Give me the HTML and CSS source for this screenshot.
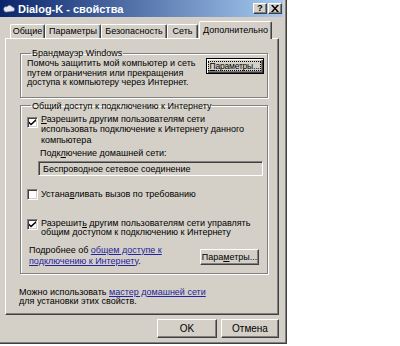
FILE: index.html
```html
<!DOCTYPE html>
<html lang="ru">
<head>
<meta charset="utf-8">
<link rel="stylesheet" href="styles.css">
</head>
<body>
<div class="window">
  <div class="titlebar">
    <svg class="ticon" width="12" height="9" viewBox="0 0 12 9"><path d="M1 6 C0 4 2 2 4 3 C5 1 8 1 9 3 C11 3 12 5 11 7 L3 8 C2 8 1 7 1 6 Z" fill="#e8e8f0" stroke="#8a90b0" stroke-width="0.6"/></svg>
    <span class="title">Dialog-K - свойства</span>
    <div class="tbtns">
      <span class="tbtn">?</span>
      <span class="tbtn">
        <svg width="8" height="7" viewBox="0 0 8 7"><path d="M0 0h2l2 2.5L6 0h2L5 3.5 8 7H6L4 4.5 2 7H0l3-3.5z" fill="#000"/></svg>
      </span>
    </div>
  </div>
  <div class="tabs">
    <div class="tab w1">Общие</div>
    <div class="tab w2">Параметры</div>
    <div class="tab w3">Безопасность</div>
    <div class="tab w4">Сеть</div>
    <div class="tab sel">Дополнительно</div>
  </div>
  <div class="panel">
    <fieldset class="group g1">
      <legend>Брандмауэр Windows</legend>
      <div class="g1row">
        <p class="desc">Помочь защитить мой компьютер и сеть<br>путем ограничения или прекращения<br>доступа к компьютеру через Интернет.</p>
        <button class="btn focus"><span class="fr"><u>П</u>араметры...</span></button>
      </div>
    </fieldset>
    <fieldset class="group g2">
      <legend>Общий доступ к подключению к Интернету</legend>
      <div class="chkrow r1">
        <span class="chk"><svg width="7" height="7" viewBox="0 0 7 7"><path d="M0 2.5l2 2 5-4.5v2l-5 4.5-2-2z" fill="#000"/></svg></span>
        <div class="chktext"><u>Р</u>азрешить другим пользователям сети<br>использовать подключение к Интернету данного<br>компьютера</div>
      </div>
      <div class="lbl">Подк<u>л</u>ючение домашней сети:</div>
      <div class="field">Беспроводное сетевое соединение</div>
      <div class="chkrow r2">
        <span class="chk"></span>
        <div class="chktext">Устана<u>в</u>ливать вызов по требованию</div>
      </div>
      <div class="chkrow r3">
        <span class="chk"><svg width="7" height="7" viewBox="0 0 7 7"><path d="M0 2.5l2 2 5-4.5v2l-5 4.5-2-2z" fill="#000"/></svg></span>
        <div class="chktext">Разрешит<u>ь</u> другим пользователям сети управлять<br>общим доступом к подключению к Интернету</div>
      </div>
      <div class="morerow">
        <p class="more">Подробнее об <a href="#">общем доступе к<br>подключению к Интернету</a>.</p>
        <button class="btn b2">Пара<u>м</u>етры...</button>
      </div>
    </fieldset>
    <p class="foot">Можно использовать <a href="#">мастер домашней сети</a><br>для установки этих свойств.</p>
  </div>
  <div class="actions">
    <button class="btn ok">OK</button>
    <button class="btn cancel">Отмена</button>
  </div>
</div>
</body>
</html>
```
FILE: styles.css
```css
* { box-sizing: border-box; }
html, body { margin: 0; padding: 0; background: #fff; }
body {
  font-family: "Liberation Sans", Arial, sans-serif;
  font-size: 9px;
  line-height: 10px;
  color: #000;
}
.window {
  width: 287px;
  height: 344px;
  background: #d4d0c8;
  border-right: 1px solid #404040;
  border-bottom: 1px solid #404040;
  box-shadow: inset -1px -1px 0 #808080;
}
.titlebar {
  height: 17px;
  margin-right: 3px;
  background: linear-gradient(to right, #0a246a, #a6caf0);
  display: flex;
  align-items: center;
  padding-left: 3px;
}
.ticon { flex: none; }
.title {
  color: #fff;
  font-weight: bold;
  font-size: 11px;
  margin-left: 3px;
  flex: 1;
}
.tbtns { display: flex; gap: 1px; margin-right: 1px; }
.tbtn {
  width: 14px;
  height: 11px;
  background: #d4d0c8;
  border-top: 1px solid #fff;
  border-left: 1px solid #fff;
  border-right: 1px solid #404040;
  border-bottom: 1px solid #404040;
  box-shadow: inset -1px -1px 0 #808080;
  display: flex;
  align-items: center;
  justify-content: center;
  font-weight: bold;
  font-size: 9px;
  line-height: 9px;
}
.tabs {
  display: flex;
  align-items: flex-end;
  height: 17px;
  margin-top: 4px;
  padding-left: 10px;
}
.tab {
  height: 14px;
  border-top: 1px solid #fff;
  border-left: 1px solid #fff;
  border-right: 1px solid #404040;
  box-shadow: inset -1px 0 0 #808080;
  border-radius: 2px 2px 0 0;
  text-align: center;
  padding-top: 1px;
  white-space: nowrap;
}
.w1 { width: 35px; }
.w2 { width: 56px; }
.w3 { width: 66px; }
.w4 { width: 31px; }
.tab.sel {
  width: 73px;
  height: 18px;
  margin-left: 1px;
  margin-bottom: -1px;
  padding-top: 3px;
  position: relative;
  z-index: 1;
  background: #d4d0c8;
}
.panel {
  margin-left: 5px;
  width: 274px;
  height: 277px;
  border-top: 1px solid #fff;
  border-left: 1px solid #fff;
  border-right: 1px solid #404040;
  border-bottom: 1px solid #404040;
  box-shadow: inset -1px -1px 0 #808080;
  padding: 9px 10px 0 14px;
}
.group {
  margin: 0;
  border: 1px solid #808080;
  box-shadow: 1px 1px 0 #fff, inset 1px 1px 0 #fff;
  min-width: 0;
}
.group legend {
  padding: 0 1px;
  margin-left: 4px;
  line-height: 10px;
}
.g1 { width: 248px; padding: 1px 3px 9px 6px; }
.g1row { display: flex; justify-content: space-between; align-items: flex-start; }
.desc { margin: 0; line-height: 9.5px; }
.btn {
  font-family: "Liberation Sans", Arial, sans-serif;
  font-size: 9px;
  line-height: 10px;
  color: #000;
  background: #d4d0c8;
  border-top: 1px solid #fff;
  border-left: 1px solid #fff;
  border-right: 1px solid #404040;
  border-bottom: 1px solid #404040;
  box-shadow: inset -1px -1px 0 #808080;
  padding: 0;
  margin: 0;
  border-radius: 0;
  white-space: nowrap;
}
.btn.focus {
  width: 58px;
  height: 16px;
  margin-top: -1px;
  border: 1px solid #000;
  box-shadow: inset 1px 1px 0 #fff, inset -1px -1px 0 #404040, inset -2px -2px 0 #808080;
  padding: 2px 2px 2px 1px;
  font-size: 8.5px;
}
.fr {
  display: block;
  border: 1px dotted #000;
  height: 10px;
  line-height: 8px;
  letter-spacing: -0.2px;
}
.g2 {
  width: 248px;
  margin-top: 3px;
  padding: 3px 4px 6px 6px;
}
.chkrow { display: flex; align-items: flex-start; }
.chk {
  flex: none;
  width: 11px;
  height: 11px;
  margin-top: 3px;
  margin-right: 3px;
  background: #fff;
  border-top: 1px solid #808080;
  border-left: 1px solid #808080;
  border-right: 1px solid #fff;
  border-bottom: 1px solid #fff;
  box-shadow: inset 1px 1px 0 #404040, inset -1px -1px 0 #d4d0c8;
  display: flex;
  align-items: center;
  justify-content: center;
}
.chktext { line-height: 10.5px; }
.lbl { margin: 3px 0 0 13px; line-height: 10.5px; }
.field {
  margin: 2px 0 0 11px;
  width: 225px;
  height: 15px;
  border-top: 1px solid #808080;
  border-left: 1px solid #808080;
  border-right: 1px solid #fff;
  border-bottom: 1px solid #fff;
  box-shadow: inset 1px 1px 0 #404040, inset -1px -1px 0 #d4d0c8;
  padding: 2px 0 0 4px;
  line-height: 10px;
  color: #000;
}
.r2 { margin-top: 13px; }
.r2 .chk { margin-top: 0; }
.r3 { margin-top: 19px; }
.r3 .chktext { line-height: 9.5px; }
.r3 .chk { margin-top: 0; }
a { color: #24249c; text-decoration: underline; }
.morerow {
  display: flex;
  justify-content: space-between;
  align-items: flex-start;
  margin-top: 7px;
  padding-right: 4px;
}
.more { margin: 0 0 0 2px; line-height: 11px; }
.b2 { width: 59px; height: 16px; margin-top: 4px; }
.foot { margin: 14px 0 0 -1px; line-height: 9.5px; }
.actions {
  display: flex;
  justify-content: flex-end;
  gap: 4px;
  margin-top: 4px;
  padding-right: 7px;
}
.ok { width: 60px; height: 19px; font-size: 10px; }
.cancel { width: 58px; height: 19px; font-size: 10px; }
```
